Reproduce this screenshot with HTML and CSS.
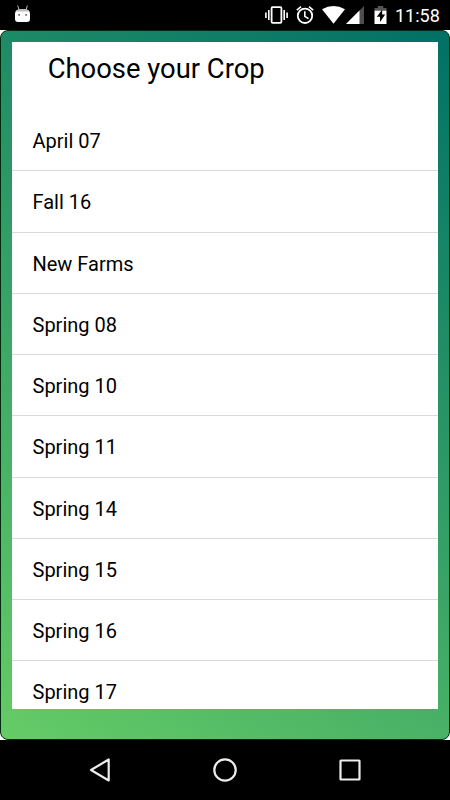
FILE: index.html
```html
<!DOCTYPE html>
<html lang="en">
<head>
<meta charset="utf-8">
<title>Choose your Crop</title>
<link rel="stylesheet" href="styles.css">
</head>
<body>
<header class="status">
  <svg class="status-icons" width="395" height="30" viewBox="0 0 395 30">
    <path d="M15 13.400Q15 9 22.500 9t7.500 4.400v5.600q0 3-3 3h-9q-3 0-3-3z" fill="#fff"/>
    <path d="M19.200 10.300 17.700 5.500M26 10.300 27.300 5.500" stroke="#bbb" fill="none"/>
    <path d="M16 11.500Q17.500 9 22.500 9t6.500 2.500z" fill="#bbb"/>
    <path d="M18.200 14h1.800v1.800h-1.800zM25.200 14h1.800v1.800h-1.800z" fill="#777"/>
    <rect x="271.600" y="7.200" width="9.800" height="15.600" rx="1" fill="none" stroke="#fff" stroke-width="1.800"/>
    <path d="M268.800 10v10M284.200 10v10M265.900 12.500v5.500M287.100 12.500v5.500" stroke="#fff" stroke-width="1.600"/>
    <circle cx="305" cy="15.800" r="7.200" fill="none" stroke="#fff" stroke-width="1.800"/>
    <path d="M304.800 11.300v5l3.700 2.400M296.800 10.200l4.200-3.500M313.200 10.200 309 6.700" fill="none" stroke="#fff" stroke-width="1.600"/>
    <path d="M322 9.300Q333.500 2.500 345 9.300L333.500 23.700z" fill="#fff"/>
    <path d="M364 6v18H346z" fill="#4d4d4d"/>
    <path d="M359.500 10.500V24H346z" fill="#fff"/>
    <path d="M374.500 11V8h3.200V6h5.600v2h3.200v3z" fill="#555"/>
    <path d="M374.500 10.700h12V24h-12z" fill="#fff"/>
    <path d="M382.200 9.500 376.800 16.800h3.200v5.200l5.200-7.400h-3z" fill="#000"/>
  </svg>
  <span class="clock">11:58</span>
</header>
<main class="screen">
  <div class="frame">
    <section class="panel">
      <h1 class="title">Choose your Crop</h1>
      <ul class="crops">
        <li class="crop">April 07</li>
        <li class="crop">Fall 16</li>
        <li class="crop">New Farms</li>
        <li class="crop">Spring 08</li>
        <li class="crop">Spring 10</li>
        <li class="crop">Spring 11</li>
        <li class="crop">Spring 14</li>
        <li class="crop">Spring 15</li>
        <li class="crop">Spring 16</li>
        <li class="crop">Spring 17</li>
      </ul>
    </section>
  </div>
</main>
<nav class="nav">
  <svg width="450" height="60" viewBox="0 0 450 60" fill="none" stroke="#ececec" stroke-width="2.200" stroke-linejoin="round">
    <path d="M108.700 19.500v21L91 30z"/>
    <circle cx="225" cy="30" r="10.700"/>
    <rect x="340.500" y="20.500" width="19" height="19" rx=".5"/>
  </svg>
</nav>
</body>
</html>
```
FILE: styles.css
```css
* {
  box-sizing: border-box;
}

body {
  margin: 0;
  width: 450px;
  height: 800px;
  display: flex;
  flex-direction: column;
  overflow: hidden;
  background: #fff;
  color: #000;
  font-family: Roboto, sans-serif;
}

.status {
  flex: none;
  height: 30px;
  display: flex;
  background: #000;
  color: #fff;
}

.status-icons {
  flex: none;
}

.clock {
  font-size: 18px;
  font-weight: 450;
  line-height: 31px;
}

.screen {
  flex: none;
  height: 710px;
}

.frame {
  height: 710px;
  padding: 11px 11px 30px;
  border: 1px solid #002b0c;
  border-radius: 8px;
  background: linear-gradient(32.4deg, #66cc66, #007066) border-box;
}

.panel {
  height: 667px;
  overflow: hidden;
  background: #fff;
}

.title {
  margin: 0;
  height: 68.200px;
  padding-left: 35.700px;
  font-size: 27.400px;
  font-weight: 400;
  line-height: 55px;
}

.crops {
  margin: 0;
  padding: 0;
  list-style: none;
}

.crop {
  height: 61.250px;
  padding-left: 20.500px;
  border-bottom: 1px solid #dadada;
  font-size: 20px;
  line-height: 62px;
}

.nav {
  flex: none;
  height: 60px;
  background: #000;
}
```
